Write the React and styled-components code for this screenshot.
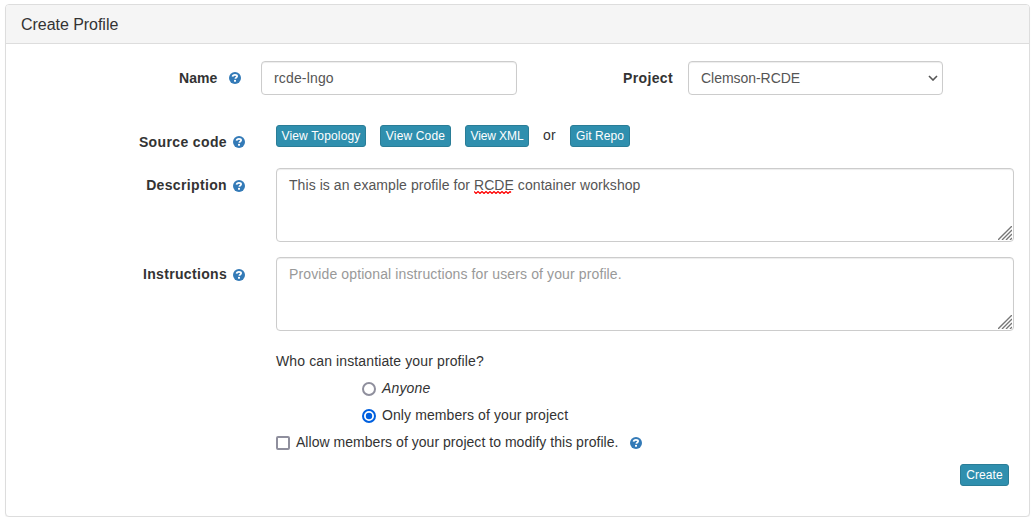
import React from "react";
import styled, { createGlobalStyle } from "styled-components";

const GlobalStyle = createGlobalStyle`
  *, *::before, *::after { box-sizing: border-box; }
  body {
    margin: 0;
    background: #fff;
    color: #333;
    font: 14px/20px "Liberation Sans", Arial, sans-serif;
  }
`;

const Panel = styled.main`
  width: 1025px;
  height: 513px;
  margin: 4px 0 0 5px;
  border: 1px solid #ddd;
  border-radius: 4px;
  background: #fff;
  box-shadow: 0 1px 1px rgba(0, 0, 0, 0.05);
`;

const PanelHeading = styled.header`
  height: 39px;
  padding: 11px 15px 9px;
  border-bottom: 1px solid #ddd;
  border-radius: 3px 3px 0 0;
  background: #f5f5f5;
`;

const PanelTitle = styled.h3`
  margin: 0;
  font-size: 16px;
  font-weight: 400;
  line-height: 18px;
  letter-spacing: -0.04px;
`;

const PanelBody = styled.form`
  display: flex;
  flex-direction: column;
  padding: 17px 15px 0 0;
`;

const Row = styled.div`
  display: flex;
  align-items: flex-start;
  height: ${(p) => p.$height}px;
`;

const Label = styled.label`
  display: flex;
  justify-content: flex-end;
  width: ${(p) => p.$width}px;
  padding: 7px 15px 0 0;
  font-weight: 700;
  white-space: nowrap;
`;

const Text = styled.span`
  letter-spacing: ${(p) => p.$spacing || 0}px;
`;

const HelpSvg = styled.svg`
  flex: none;
  width: 12px;
  height: 12px;
  margin: ${(p) => p.$top}px ${(p) => p.$right || 0}px 0 ${(p) => p.$left}px;
`;

const controlBox = `
  border: 1px solid #ccc;
  border-radius: 4px;
  background: #fff;
  box-shadow: inset 0 1px 1px rgba(0, 0, 0, 0.075);
  color: #555;
  font: 14px/20px "Liberation Sans", Arial, sans-serif;
`;

const TextInput = styled.input`
  ${controlBox}
  width: 256px;
  height: 34px;
  padding: 6px 12px;
  letter-spacing: 0.16px;
  outline: none;
`;

const SelectBox = styled.div`
  ${controlBox}
  display: flex;
  align-items: center;
  justify-content: space-between;
  width: 255px;
  height: 34px;
  padding: 0 4px 0 12px;
`;

const TextBox = styled.div`
  ${controlBox}
  position: relative;
  width: 738px;
  height: 74px;
  padding: 6px 12px;
  color: ${(p) => (p.$placeholder ? "#999" : "#555")};
  letter-spacing: ${(p) => p.$spacing}px;
`;

const ResizeGrip = styled.svg`
  position: absolute;
  right: 1px;
  bottom: 1px;
  width: 14px;
  height: 14px;
`;

const Misspelled = styled.span`
  position: relative;
`;

const Squiggle = styled.svg`
  position: absolute;
  left: 0;
  top: 14px;
  width: 39px;
  height: 3px;
`;

const Button = styled.button`
  height: 22px;
  width: ${(p) => p.$width}px;
  padding: 0;
  border: 1px solid #2a7d97;
  border-radius: 3px;
  background: #2f8fae;
  color: #fff;
  font: 12px/18px "Liberation Sans", Arial, sans-serif;
  letter-spacing: ${(p) => p.$spacing || 0}px;
  white-space: nowrap;
`;

const ButtonGroup = styled.div`
  display: flex;
  gap: 14px;
`;

const Or = styled.span`
  width: 13px;
  letter-spacing: 0.3px;
`;

const Options = styled.section`
  display: flex;
  flex-direction: column;
  padding-left: 270px;
`;

const Line = styled.label`
  display: flex;
  align-items: flex-start;
  height: 27px;
  padding-left: ${(p) => p.$indent || 0}px;
  white-space: nowrap;
`;

const Choice = styled.svg`
  flex: none;
  width: 14px;
  height: 14px;
  margin: 4px 6px 0 0;
`;

const Footer = styled.footer`
  display: flex;
  justify-content: flex-end;
  padding: 5px 5px 0 0;
`;

const Help = ({ top = 5, left = 6, right }) => (
  <HelpSvg $top={top} $left={left} $right={right} viewBox="0 0 12 12">
    <circle cx="6" cy="6" r="6" fill="#337ab7" />
    <path d="M3.6 4.6C3.7 3.2 4.6 2.8 6 2.8c1.4 0 2.1.6 2.1 1.5 0 1.3-1.7 1.1-1.7 2.5" fill="none" stroke="#fff" strokeWidth="1.8" />
    <rect x="5" y="7.9" width="2" height="1.8" fill="#fff" />
  </HelpSvg>
);

const Grip = () => (
  <ResizeGrip viewBox="0 0 14 14">
    <path d="M0 14L14 0M4 14L14 4M8 14l6-6M12 14l2-2" stroke="#777" strokeWidth="1.4" fill="none" />
  </ResizeGrip>
);

export default function App() {
  return (
    <>
      <GlobalStyle />
      <Panel>
        <PanelHeading>
          <PanelTitle>Create Profile</PanelTitle>
        </PanelHeading>
        <PanelBody>
          <Row $height={64}>
            <Label $width={255}>
              <Text $spacing={0.1}>Name</Text>
              <Help top={4} left={11} right={5.5} />
            </Label>
            <TextInput defaultValue="rcde-lngo" />
            <Label $width={171}>
              <Text $spacing={0.35}>Project</Text>
            </Label>
            <SelectBox>
              <Text $spacing={-0.04}>Clemson-RCDE</Text>
              <svg width="10" height="6" viewBox="0 0 10 6">
                <path d="M1 1l4 4 4-4" fill="none" stroke="#555" strokeWidth="1.6" />
              </svg>
            </SelectBox>
          </Row>
          <Row $height={43}>
            <Label $width={270}>
              <Text $spacing={0.37}>Source code</Text>
              <Help top={4} left={6.3} right={15.7} />
            </Label>
            <ButtonGroup>
              <Button type="button" $width={90} $spacing={0.15}>View Topology</Button>
              <Button type="button" $width={71} $spacing={0.16}>View Code</Button>
              <Button type="button" $width={64} $spacing={-0.1}>View XML</Button>
              <Or>or</Or>
              <Button type="button" $width={60} $spacing={0.05}>Git Repo</Button>
            </ButtonGroup>
          </Row>
          <Row $height={89}>
            <Label $width={270}>
              <Text $spacing={0.35}>Description</Text>
              <Help left={6.3} right={15.7} />
            </Label>
            <TextBox $spacing={0.067}>
              This is an example profile for{" "}
              <Misspelled>
                RCDE
                <Squiggle viewBox="0 0 39 3">
                  <path d="M0 .5l2 2 2-2 2 2 2-2 2 2 2-2 2 2 2-2 2 2 2-2 2 2 2-2 2 2 2-2 2 2 2-2 2 2 2-2 1 1" fill="none" stroke="#f00" strokeWidth="1.2" />
                </Squiggle>
              </Misspelled>{" "}
              container workshop
              <Grip />
            </TextBox>
          </Row>
          <Row $height={94}>
            <Label $width={270}>
              <Text $spacing={0.33}>Instructions</Text>
              <Help left={6.3} right={15.7} />
            </Label>
            <TextBox $placeholder $spacing={0.12}>
              Provide optional instructions for users of your profile.
              <Grip />
            </TextBox>
          </Row>
          <Options>
            <Line as="div"><Text $spacing={0.12}>Who can instantiate your profile?</Text></Line>
            <Line $indent={86}>
              <Choice viewBox="0 0 14 14">
                <circle cx="7" cy="7" r="6" fill="#fff" stroke="#8f8f9d" strokeWidth="2" />
              </Choice>
              <Text as="em" $spacing={0.15}>Anyone</Text>
            </Line>
            <Line $indent={86}>
              <Choice viewBox="0 0 14 14">
                <circle cx="7" cy="7" r="6" fill="#fff" stroke="#0060df" strokeWidth="2" />
                <circle cx="7" cy="7" r="3.2" fill="#0060df" />
              </Choice>
              <Text $spacing={0.09}>Only members of your project</Text>
            </Line>
            <Line>
              <Choice viewBox="0 0 14 14">
                <rect x="1" y="1" width="12" height="12" rx="1" fill="#fff" stroke="#8f8f9d" strokeWidth="2" />
              </Choice>
              <Text $spacing={0.035}>Allow members of your project to modify this profile.</Text>
              <Help left={11.3} />
            </Line>
          </Options>
          <Footer>
            <Button type="button" $width={49} $spacing={0.1}>Create</Button>
          </Footer>
        </PanelBody>
      </Panel>
    </>
  );
}
